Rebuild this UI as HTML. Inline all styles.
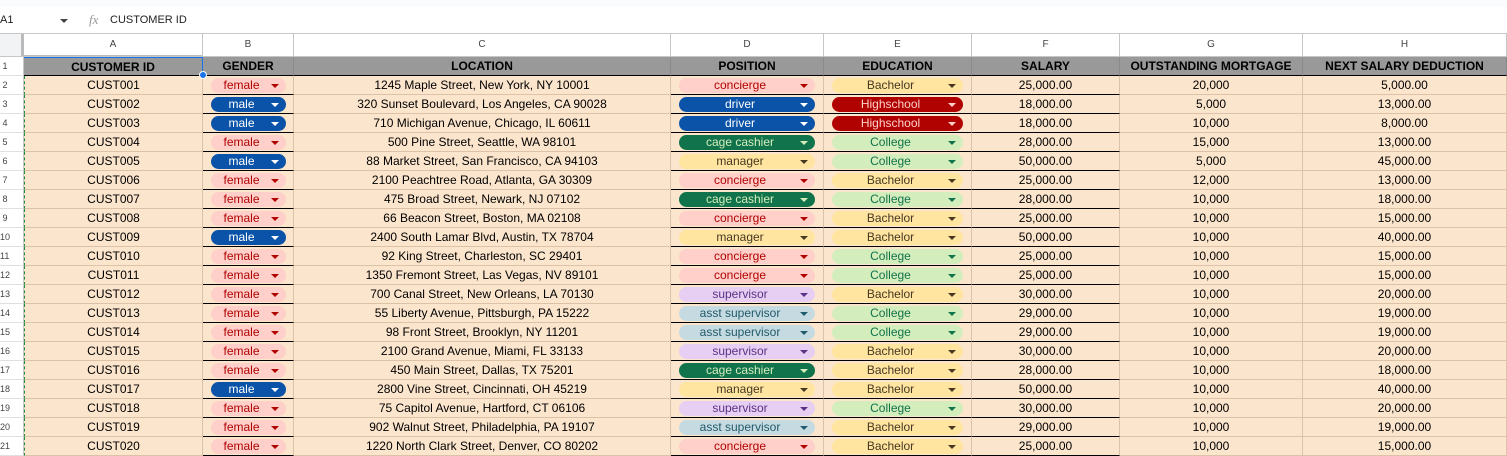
<!DOCTYPE html>
<html><head><meta charset="utf-8"><style>
*{box-sizing:border-box;margin:0;padding:0}
body{width:1507px;height:451px;overflow:hidden;background:#fff;font-family:"Liberation Sans",Arial,sans-serif;position:relative}
body>*:not(.top){margin-top:1px}
.top{position:absolute;left:0;top:0;width:1507px;height:7px;background:#f9fbfd}
.fbar{position:absolute;left:0;top:7px;width:1507px;height:26px;background:#fff;border-bottom:1px solid #c7c7c7;font-size:11px;color:#1f1f1f}
.colhdr{position:absolute;left:0;top:33px;height:23px;width:1507px;background:#fff;border-bottom:1px solid #c4c7c5;display:flex}
.colhdr div{height:22px;border-right:1px solid #c4c7c5;font-size:10px;color:#444;text-align:center;line-height:22px}
.row{position:absolute;left:0;height:19px;display:flex}
.c{height:19px;border-right:1px solid #dcc3a8;border-bottom:1px solid #dcc3a8;background:#fce5cd;font-size:12px;line-height:18px;text-align:center;color:#000;white-space:nowrap;position:relative}
.rn{width:24px;background:#fff;border-right:1px solid #c4c7c5;border-bottom:1px solid #e0e0e0;font-size:9px;color:#444;line-height:18px;text-align:left;padding-left:0;height:19px}
.bb{border-bottom:1px solid #000}
.h .c{background:#999;font-weight:bold;font-size:12px;border-right:1px solid #8a8a8a;border-bottom:1px solid #000}
.w0{width:24px}.wA{width:179px}.wB{width:91px}.wC{width:377px}.wD{width:153px}.wE{width:148px}.wF{width:148px}.wG{width:183px}.wH{width:204px}
.ch{position:absolute;top:2px;height:15px;border-radius:8px;font-size:12px;line-height:15px;text-align:center;padding-right:14px}
.ch::after{content:"";position:absolute;right:7px;top:6px;border-left:4px solid transparent;border-right:4px solid transparent;border-top:4px solid currentColor}
.cB{left:8px;width:75px}.cD{left:8px;width:136px}.cE{left:8px;width:131px}
.fe{background:#ffcfc9;color:#b10202}
.ma{background:#0a53a8;color:#fff}
.cc{background:#11734b;color:#d4edbc}
.mg{background:#ffe5a0;color:#473821}
.su{background:#e6cff2;color:#5a3286}
.as{background:#c6dbe1;color:#215a6c}
.hs{background:#b10202;color:#ffcfc9}
.co{background:#d4edbc;color:#11734b}
.ca{border-left:1px dashed #1e8e3e}
</style></head><body>
<div class="top"></div>
<div class="fbar"><span style="position:absolute;left:0;top:6px">A1</span><span style="position:absolute;left:60px;top:11px;border-left:4px solid transparent;border-right:4px solid transparent;border-top:4px solid #444"></span><span style="position:absolute;left:89px;top:4px;font-family:'Liberation Serif',serif;font-style:italic;color:#999;font-size:13px">fx</span><span style="position:absolute;left:110px;top:6px">CUSTOMER ID</span></div>
<div class="colhdr"><div class="w0" style="background:#f1f3f4;border-right:3px solid #bbb"></div><div class="wA" style="border-bottom:1px solid #bbb">A</div><div class="wB">B</div><div class="wC">C</div><div class="wD">D</div><div class="wE">E</div><div class="wF">F</div><div class="wG">G</div><div class="wH">H</div></div>

<div class="row h" style="top:56px"><div class="rn">&nbsp;1</div><div class="c wA" style="border-top:1px solid #1a73e8;border-right:1px solid #1a73e8">CUSTOMER ID</div><div class="c wB">GENDER</div><div class="c wC">LOCATION</div><div class="c wD">POSITION</div><div class="c wE">EDUCATION</div><div class="c wF">SALARY</div><div class="c wG">OUTSTANDING MORTGAGE</div><div class="c wH">NEXT SALARY DEDUCTION</div></div>
<div style="position:absolute;left:199px;top:70px;width:8px;height:8px;border-radius:50%;background:#1a73e8;border:1px solid #fff;z-index:5"></div>

<div class="row" style="top:75px"><div class="rn">&nbsp;2</div><div class="c wA ca">CUST001</div><div class="c wB bb"><span class="ch cB fe">female</span></div><div class="c wC">1245 Maple Street, New York, NY 10001</div><div class="c wD bb"><span class="ch cD fe">concierge</span></div><div class="c wE bb"><span class="ch cE mg">Bachelor</span></div><div class="c wF bb">25,000.00</div><div class="c wG">20,000</div><div class="c wH">5,000.00</div></div>
<div class="row" style="top:94px"><div class="rn">&nbsp;3</div><div class="c wA ca">CUST002</div><div class="c wB bb"><span class="ch cB ma">male</span></div><div class="c wC">320 Sunset Boulevard, Los Angeles, CA 90028</div><div class="c wD bb"><span class="ch cD ma">driver</span></div><div class="c wE bb"><span class="ch cE hs">Highschool</span></div><div class="c wF bb">18,000.00</div><div class="c wG">5,000</div><div class="c wH">13,000.00</div></div>
<div class="row" style="top:113px"><div class="rn">&nbsp;4</div><div class="c wA ca">CUST003</div><div class="c wB bb"><span class="ch cB ma">male</span></div><div class="c wC">710 Michigan Avenue, Chicago, IL 60611</div><div class="c wD bb"><span class="ch cD ma">driver</span></div><div class="c wE bb"><span class="ch cE hs">Highschool</span></div><div class="c wF bb">18,000.00</div><div class="c wG">10,000</div><div class="c wH">8,000.00</div></div>
<div class="row" style="top:132px"><div class="rn">&nbsp;5</div><div class="c wA ca">CUST004</div><div class="c wB bb"><span class="ch cB fe">female</span></div><div class="c wC">500 Pine Street, Seattle, WA 98101</div><div class="c wD bb"><span class="ch cD cc">cage cashier</span></div><div class="c wE bb"><span class="ch cE co">College</span></div><div class="c wF bb">28,000.00</div><div class="c wG">15,000</div><div class="c wH">13,000.00</div></div>
<div class="row" style="top:151px"><div class="rn">&nbsp;6</div><div class="c wA ca">CUST005</div><div class="c wB bb"><span class="ch cB ma">male</span></div><div class="c wC">88 Market Street, San Francisco, CA 94103</div><div class="c wD bb"><span class="ch cD mg">manager</span></div><div class="c wE bb"><span class="ch cE co">College</span></div><div class="c wF bb">50,000.00</div><div class="c wG">5,000</div><div class="c wH">45,000.00</div></div>
<div class="row" style="top:170px"><div class="rn">&nbsp;7</div><div class="c wA ca">CUST006</div><div class="c wB bb"><span class="ch cB fe">female</span></div><div class="c wC">2100 Peachtree Road, Atlanta, GA 30309</div><div class="c wD bb"><span class="ch cD fe">concierge</span></div><div class="c wE bb"><span class="ch cE mg">Bachelor</span></div><div class="c wF bb">25,000.00</div><div class="c wG">12,000</div><div class="c wH">13,000.00</div></div>
<div class="row" style="top:189px"><div class="rn">&nbsp;8</div><div class="c wA ca">CUST007</div><div class="c wB bb"><span class="ch cB fe">female</span></div><div class="c wC">475 Broad Street, Newark, NJ 07102</div><div class="c wD bb"><span class="ch cD cc">cage cashier</span></div><div class="c wE bb"><span class="ch cE co">College</span></div><div class="c wF bb">28,000.00</div><div class="c wG">10,000</div><div class="c wH">18,000.00</div></div>
<div class="row" style="top:208px"><div class="rn">&nbsp;9</div><div class="c wA ca">CUST008</div><div class="c wB bb"><span class="ch cB fe">female</span></div><div class="c wC">66 Beacon Street, Boston, MA 02108</div><div class="c wD bb"><span class="ch cD fe">concierge</span></div><div class="c wE bb"><span class="ch cE mg">Bachelor</span></div><div class="c wF bb">25,000.00</div><div class="c wG">10,000</div><div class="c wH">15,000.00</div></div>
<div class="row" style="top:227px"><div class="rn">10</div><div class="c wA ca">CUST009</div><div class="c wB bb"><span class="ch cB ma">male</span></div><div class="c wC">2400 South Lamar Blvd, Austin, TX 78704</div><div class="c wD bb"><span class="ch cD mg">manager</span></div><div class="c wE bb"><span class="ch cE mg">Bachelor</span></div><div class="c wF bb">50,000.00</div><div class="c wG">10,000</div><div class="c wH">40,000.00</div></div>
<div class="row" style="top:246px"><div class="rn">11</div><div class="c wA ca">CUST010</div><div class="c wB bb"><span class="ch cB fe">female</span></div><div class="c wC">92 King Street, Charleston, SC 29401</div><div class="c wD bb"><span class="ch cD fe">concierge</span></div><div class="c wE bb"><span class="ch cE co">College</span></div><div class="c wF bb">25,000.00</div><div class="c wG">10,000</div><div class="c wH">15,000.00</div></div>
<div class="row" style="top:265px"><div class="rn">12</div><div class="c wA ca">CUST011</div><div class="c wB bb"><span class="ch cB fe">female</span></div><div class="c wC">1350 Fremont Street, Las Vegas, NV 89101</div><div class="c wD bb"><span class="ch cD fe">concierge</span></div><div class="c wE bb"><span class="ch cE co">College</span></div><div class="c wF bb">25,000.00</div><div class="c wG">10,000</div><div class="c wH">15,000.00</div></div>
<div class="row" style="top:284px"><div class="rn">13</div><div class="c wA ca">CUST012</div><div class="c wB bb"><span class="ch cB fe">female</span></div><div class="c wC">700 Canal Street, New Orleans, LA 70130</div><div class="c wD bb"><span class="ch cD su">supervisor</span></div><div class="c wE bb"><span class="ch cE mg">Bachelor</span></div><div class="c wF bb">30,000.00</div><div class="c wG">10,000</div><div class="c wH">20,000.00</div></div>
<div class="row" style="top:303px"><div class="rn">14</div><div class="c wA ca">CUST013</div><div class="c wB bb"><span class="ch cB fe">female</span></div><div class="c wC">55 Liberty Avenue, Pittsburgh, PA 15222</div><div class="c wD bb"><span class="ch cD as">asst supervisor</span></div><div class="c wE bb"><span class="ch cE co">College</span></div><div class="c wF bb">29,000.00</div><div class="c wG">10,000</div><div class="c wH">19,000.00</div></div>
<div class="row" style="top:322px"><div class="rn">15</div><div class="c wA ca">CUST014</div><div class="c wB bb"><span class="ch cB fe">female</span></div><div class="c wC">98 Front Street, Brooklyn, NY 11201</div><div class="c wD bb"><span class="ch cD as">asst supervisor</span></div><div class="c wE bb"><span class="ch cE co">College</span></div><div class="c wF bb">29,000.00</div><div class="c wG">10,000</div><div class="c wH">19,000.00</div></div>
<div class="row" style="top:341px"><div class="rn">16</div><div class="c wA ca">CUST015</div><div class="c wB bb"><span class="ch cB fe">female</span></div><div class="c wC">2100 Grand Avenue, Miami, FL 33133</div><div class="c wD bb"><span class="ch cD su">supervisor</span></div><div class="c wE bb"><span class="ch cE mg">Bachelor</span></div><div class="c wF bb">30,000.00</div><div class="c wG">10,000</div><div class="c wH">20,000.00</div></div>
<div class="row" style="top:360px"><div class="rn">17</div><div class="c wA ca">CUST016</div><div class="c wB bb"><span class="ch cB fe">female</span></div><div class="c wC">450 Main Street, Dallas, TX 75201</div><div class="c wD bb"><span class="ch cD cc">cage cashier</span></div><div class="c wE bb"><span class="ch cE mg">Bachelor</span></div><div class="c wF bb">28,000.00</div><div class="c wG">10,000</div><div class="c wH">18,000.00</div></div>
<div class="row" style="top:379px"><div class="rn">18</div><div class="c wA ca">CUST017</div><div class="c wB bb"><span class="ch cB ma">male</span></div><div class="c wC">2800 Vine Street, Cincinnati, OH 45219</div><div class="c wD bb"><span class="ch cD mg">manager</span></div><div class="c wE bb"><span class="ch cE mg">Bachelor</span></div><div class="c wF bb">50,000.00</div><div class="c wG">10,000</div><div class="c wH">40,000.00</div></div>
<div class="row" style="top:398px"><div class="rn">19</div><div class="c wA ca">CUST018</div><div class="c wB bb"><span class="ch cB fe">female</span></div><div class="c wC">75 Capitol Avenue, Hartford, CT 06106</div><div class="c wD bb"><span class="ch cD su">supervisor</span></div><div class="c wE bb"><span class="ch cE co">College</span></div><div class="c wF bb">30,000.00</div><div class="c wG">10,000</div><div class="c wH">20,000.00</div></div>
<div class="row" style="top:417px"><div class="rn">20</div><div class="c wA ca">CUST019</div><div class="c wB bb"><span class="ch cB fe">female</span></div><div class="c wC">902 Walnut Street, Philadelphia, PA 19107</div><div class="c wD bb"><span class="ch cD as">asst supervisor</span></div><div class="c wE bb"><span class="ch cE mg">Bachelor</span></div><div class="c wF bb">29,000.00</div><div class="c wG">10,000</div><div class="c wH">19,000.00</div></div>
<div class="row" style="top:436px"><div class="rn">21</div><div class="c wA ca">CUST020</div><div class="c wB bb"><span class="ch cB fe">female</span></div><div class="c wC">1220 North Clark Street, Denver, CO 80202</div><div class="c wD bb"><span class="ch cD fe">concierge</span></div><div class="c wE bb"><span class="ch cE mg">Bachelor</span></div><div class="c wF bb">25,000.00</div><div class="c wG">10,000</div><div class="c wH">15,000.00</div></div>
</body></html>
